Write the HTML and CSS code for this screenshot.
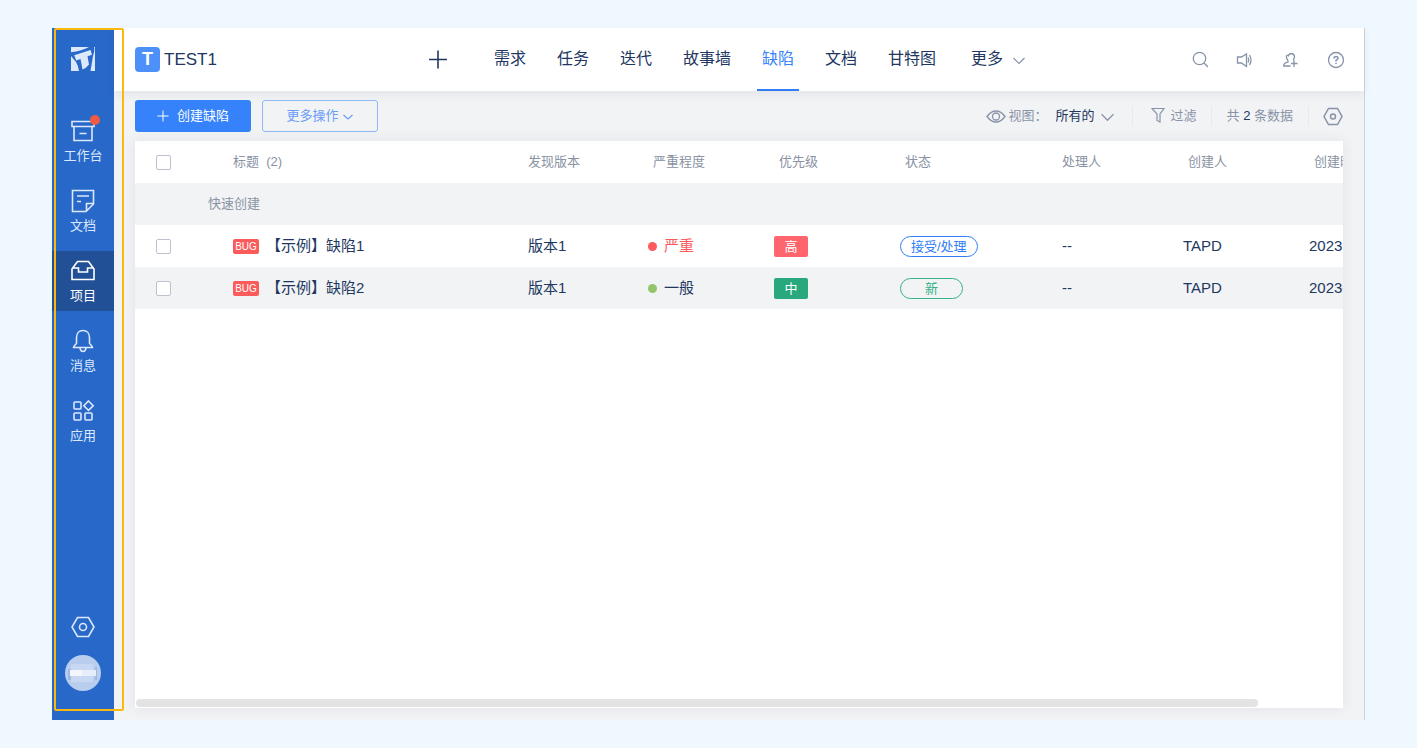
FILE: index.html
```html
<!DOCTYPE html>
<html lang="zh-CN">
<head>
<meta charset="utf-8">
<meta name="viewport" content="width=device-width, initial-scale=1">
<title>TEST1 - 缺陷</title>
<link rel="stylesheet" href="styles.css">
</head>
<body>
<div class="app">
  <aside class="sidebar">
    <svg class="logo" viewBox="0 0 24 24" aria-hidden="true">
      <path class="logo-tile" d="M0 0h24v24H0z"/>
      <path class="logo-cut" d="M0 5.200Q11 4 18 0L23 0Q24 3 22 9L19.500 24L8 24Q7 18 5 15L0 9z"/>
      <path class="logo-tile" d="M3.200 8.200L19.500 3L21 7.800L16.500 9.300L18 17.500Q15 21.500 11.500 22.500L9.500 12L5.200 13.500z"/>
    </svg>
    <nav class="side-nav">
      <a class="side-item" href="#">
        <svg viewBox="0 0 24 24"><path d="M1 2.500h22v5H1zM3 7.500v14h18v-14M8.500 14.500h7"/></svg>
        <span>工作台</span>
        <i class="unread"></i>
      </a>
      <a class="side-item" href="#">
        <svg viewBox="0 0 24 24"><path d="M1.500 1.500H22.500V15L15 22.500H1.500zM22 14.500h-6.500v7.500M6 7h12M6 12.500h4"/></svg>
        <span>文档</span>
      </a>
      <a class="side-item active" href="#">
        <svg viewBox="0 0 24 24"><path d="M1 10L6.500 2.500h11L23 10v10.500H1zM1 9h6.500v4h9v-4H23"/></svg>
        <span>项目</span>
      </a>
      <a class="side-item" href="#">
        <svg viewBox="0 0 24 24"><path d="M2.500 18.500Q2.500 17.500 5.500 14.500V8.500C5.500 4.500 8 1.500 12 1.500S18.500 4.500 18.500 8.500V14.500Q21.500 17.500 21.500 18.500zM9 19Q9.500 22.500 12 22.500T15 19"/></svg>
        <span>消息</span>
      </a>
      <a class="side-item" href="#">
        <svg viewBox="0 0 24 24"><rect x="3" y="3" width="7" height="7" rx="1"/><path d="M17.500 2L22.200 6.700L17.500 11.400L12.800 6.700z"/><rect x="3" y="14" width="7" height="7" rx="1"/><rect x="14" y="14" width="7" height="7" rx="1"/></svg>
        <span>应用</span>
      </a>
    </nav>
    <div class="side-foot">
      <button class="side-settings" type="button" aria-label="设置"><svg viewBox="0 0 24 24"><path d="M6.500 2.500h11L23 12l-5.500 9.500h-11L1 12z"/><circle cx="12" cy="12" r="3.500"/></svg></button>
      <svg class="avatar" viewBox="0 0 36 36" role="img" aria-label="头像"><circle cx="18" cy="18" r="18" fill="#b9cdef"/><path fill="#c9d8f2" d="M6 9h22v18H6z"/><path fill="#9fb9e5" d="M3 14h3v11H3zM30 12h2v13h-2z"/><path fill="#e8eef9" d="M5 15h26v6H5z"/><path fill="#f3f6fc" d="M5 15h12v6H5z"/></svg>
    </div>
  </aside>

  <div class="main">
    <header class="topbar">
      <div class="project"><span class="project-badge">T</span><span>TEST1</span></div>
      <button class="add" type="button" aria-label="新建"><svg viewBox="0 0 20 20"><path d="M10 0.500v18M1 9.500h18"/></svg></button>
      <nav class="tabs">
        <a href="#">需求</a>
        <a href="#">任务</a>
        <a href="#">迭代</a>
        <a href="#">故事墙</a>
        <a class="current" href="#">缺陷</a>
        <a href="#">文档</a>
        <a href="#">甘特图</a>
        <button class="more" type="button">更多<svg class="chevron" viewBox="0 0 12 12"><path d="M0.500 5l5.500 5.500 5.500-5.500"/></svg></button>
      </nav>
      <div class="tools">
        <button type="button" aria-label="搜索"><svg viewBox="0 0 20 20"><circle cx="11.500" cy="8.500" r="6.200"/><path d="M16 13l4 4"/></svg></button>
        <button type="button" aria-label="公告"><svg viewBox="0 0 20 20"><path d="M3.500 7h4l5-3v12.500l-5-3.500h-4zM14.200 7.500q1 2.500 0 5M15.500 5q3 5 0 10"/></svg></button>
        <button type="button" aria-label="邀请成员"><svg viewBox="0 0 20 20"><path d="M10.500 16H3.800V14.500Q4.500 12.800 8 12.200Q8.500 11 7.200 9.500Q5 5 8.500 4.800M8.500 6.500Q8.500 3.500 11.500 3.500Q14.500 4 14.500 7Q14.500 8.500 13 10M14 10v7M11 13.500h6.500"/></svg></button>
        <button type="button" aria-label="帮助"><svg viewBox="0 0 20 20"><circle cx="10" cy="10" r="7.500"/><path class="strong" d="M8 8.500Q8 6.500 10 6.500T12 8.300Q12 9.300 10 10.300V11.500M10 12.800v1.200"/></svg></button>
      </div>
    </header>

    <div class="content">
      <div class="toolbar">
        <button class="btn primary" type="button"><svg viewBox="0 0 12 12"><path d="M6 0.500v11M0.500 6h11"/></svg>创建缺陷</button>
        <button class="btn outline" type="button">更多操作<svg class="chevron" viewBox="0 0 12 12"><path d="M1.500 5l4.500 4 4.500-4"/></svg></button>
        <div class="filters">
          <div class="view">
            <svg class="eye" viewBox="0 0 20 14"><path d="M1 7.500Q5 2 10 2T19 7.500Q15 13 10 13T1 7.500z"/><circle cx="10" cy="7.500" r="3.500"/></svg>
            <label for="view">视图：</label>
            <span class="picker">
              <select id="view"><option>所有的</option></select>
              <svg class="chevron" viewBox="0 0 12 12"><path d="M0.500 4l5.500 5.500 5.500-5.500"/></svg>
            </span>
          </div>
          <button class="filter" type="button"><svg viewBox="0 0 14 16"><path d="M1 0.500h12L9 6v8l-3-1.500V6z"/></svg>过滤</button>
          <span class="count">共 <b>2</b> 条数据</span>
          <button class="columns" type="button" aria-label="列设置"><svg viewBox="0 0 20 20"><path d="M5.500 2.500h9L19 10.500l-4.500 8h-9L1 10.500z"/><circle cx="10" cy="10.500" r="2.500"/></svg></button>
        </div>
      </div>

      <section class="panel">
        <div class="scroller">
          <table>
            <colgroup><col class="c-check"><col class="c-title"><col class="c-version"><col class="c-std"><col class="c-std"><col class="c-status"><col class="c-std"><col class="c-std"><col class="c-std"></colgroup>
            <thead>
              <tr>
                <th><input type="checkbox" aria-label="全选"></th>
                <th>标题 &nbsp;(2)</th><th>发现版本</th><th>严重程度</th><th>优先级</th><th>状态</th><th>处理人</th><th>创建人</th><th>创建时间</th>
              </tr>
            </thead>
            <tbody>
              <tr class="shade"><td class="quick" colspan="9">快速创建</td></tr>
              <tr>
                <td><input type="checkbox" aria-label="选择缺陷1"></td>
                <td class="inset"><a class="title" href="#"><span class="bug">BUG</span>【示例】缺陷1</a></td>
                <td class="inset">版本1</td>
                <td><span class="severity serious">严重</span></td>
                <td><span class="priority high">高</span></td>
                <td><span class="status open">接受/处理</span></td>
                <td class="inset">--</td>
                <td>TAPD</td>
                <td>2023-</td>
              </tr>
              <tr class="shade">
                <td><input type="checkbox" aria-label="选择缺陷2"></td>
                <td class="inset"><a class="title" href="#"><span class="bug">BUG</span>【示例】缺陷2</a></td>
                <td class="inset">版本1</td>
                <td><span class="severity normal">一般</span></td>
                <td><span class="priority medium">中</span></td>
                <td><span class="status new">新</span></td>
                <td class="inset">--</td>
                <td>TAPD</td>
                <td>2023-</td>
              </tr>
            </tbody>
          </table>
        </div>
        <div class="track"><div class="thumb"></div></div>
      </section>
    </div>
  </div>
  <div class="highlight"></div>
</div>
</body>
</html>
```

FILE: styles.css
```css
* { box-sizing: border-box; }

body {
  margin: 0;
  padding: 28px 52px;
  background: #eff7ff;
  color: #22375f;
  font: 15px/20px "Liberation Sans", "Noto Sans CJK SC", sans-serif;
}

a { color: inherit; text-decoration: none; }

button {
  padding: 0;
  border: 0;
  background: none;
  color: inherit;
  font: inherit;
  cursor: pointer;
}

svg {
  display: block;
  fill: none;
  stroke: currentColor;
}

.app {
  position: relative;
  display: flex;
  min-height: calc(100vh - 56px);
}

.highlight {
  position: absolute;
  top: 0;
  bottom: 9px;
  left: 2px;
  width: 70px;
  border: 2px solid #fbb80f;
  border-radius: 2px;
  pointer-events: none;
}

/* Sidebar */

.sidebar {
  display: flex;
  flex: none;
  flex-direction: column;
  width: 62px;
  padding: 19px 0 29px;
  background: #2868c9;
  color: #dce8fb;
}

.logo { width: 24px; height: 24px; margin: 0 auto 40px; stroke: none; }
.logo-tile { fill: #dce8fb; }
.logo-cut { fill: #2868c9; }

.side-nav { display: flex; flex-direction: column; gap: 10px; }

.side-item {
  position: relative;
  display: flex;
  flex-direction: column;
  align-items: center;
  gap: 4px;
  height: 60px;
  padding-top: 8px;
  font-size: 13px;
  line-height: 18px;
}

.side-item svg, .side-settings svg { width: 24px; height: 24px; stroke-width: 1.6; }
.side-item.active { background: #215097; color: #fff; }

.unread {
  position: absolute;
  top: 4px;
  right: 14px;
  width: 10px;
  height: 10px;
  border-radius: 50%;
  background: #ee5a42;
}

.side-foot {
  display: flex;
  flex-direction: column;
  align-items: center;
  gap: 16px;
  margin-top: auto;
}

.avatar { width: 36px; height: 36px; stroke: none; }

/* Top bar */

.main {
  display: flex;
  flex: 1;
  flex-direction: column;
  min-width: 0;
  border-right: 1px solid #cdd3da;
  background: #f2f3f5;
}

.topbar {
  display: flex;
  align-items: center;
  height: 63px;
  padding: 0 18px 0 21px;
  background: #fff;
  box-shadow: 0 4px 8px rgba(40, 55, 80, 0.07);
}

.project {
  display: flex;
  align-items: center;
  gap: 4px;
  width: 293px;
  font-size: 17px;
}

.project-badge {
  width: 25px;
  border-radius: 4px;
  background: #4e90fa;
  color: #fff;
  font-size: 18px;
  font-weight: 700;
  line-height: 25px;
  text-align: center;
}

.add svg { width: 20px; height: 20px; stroke-width: 1.6; }

.tabs {
  display: flex;
  gap: 21px;
  align-self: stretch;
  margin-left: 41px;
  font-size: 16px;
  white-space: nowrap;
}

.tabs a { padding: 21px 5px 0; border-bottom: 2px solid transparent; }
.tabs .current { border-color: #2f7cf6; color: #3582fb; }

.more {
  display: flex;
  align-items: center;
  gap: 10px;
  height: 62px;
  margin-left: 9px;
}

.chevron { width: 12px; height: 12px; color: #8993a8; stroke-width: 1.2; }

.tools { display: flex; gap: 26px; margin-left: auto; color: #8793a8; }
.tools svg { width: 20px; height: 20px; stroke-width: 1.3; }
.tools .strong { stroke-width: 1.5; }

/* Toolbar */

.content {
  display: flex;
  flex: 1;
  flex-direction: column;
  padding: 9px 21px 12px;
}

.toolbar {
  display: flex;
  align-items: center;
  gap: 11px;
  margin-bottom: 9px;
  font-size: 13px;
  white-space: nowrap;
}

.btn {
  display: flex;
  align-items: center;
  justify-content: center;
  width: 116px;
  height: 32px;
  border-radius: 3px;
}

.primary { gap: 8px; background: #3582fb; color: #fff; }
.primary svg { width: 12px; height: 12px; }
.outline { gap: 3px; border: 1px solid #8fb8fa; color: #6b9df8; }
.outline .chevron { color: inherit; }

.filters {
  display: flex;
  align-items: center;
  margin-left: auto;
  color: #8993a8;
}

.filters > * { height: 20px; }
.view { display: flex; align-items: center; padding-right: 18px; }
.eye { width: 20px; height: 14px; margin-right: 2px; stroke-width: 1.3; }
.picker { display: grid; align-items: center; width: 58px; margin-left: 8px; }
.picker > * { grid-area: 1 / 1; }
.picker .chevron { justify-self: end; width: 13px; height: 13px; pointer-events: none; }

select {
  width: 100%;
  padding: 0;
  border: 0;
  appearance: none;
  background: none;
  color: #22375f;
  font: inherit;
}

.filter {
  display: flex;
  align-items: center;
  gap: 6px;
  padding: 0 14px 0 18px;
  border-right: 1px solid #e8eaee;
  border-left: 1px solid #e8eaee;
}

.filter svg { width: 14px; height: 16px; stroke-width: 1.2; }
.count { padding: 0 15px; border-right: 1px solid #e8eaee; }
.count b { color: #22375f; font-weight: 400; }
.columns { padding-left: 14px; }
.columns svg { width: 20px; height: 20px; stroke-width: 1.5; }

/* Table */

.panel {
  display: flex;
  flex: 1;
  flex-direction: column;
  background: #fff;
  box-shadow: 0 0 12px rgba(40, 55, 80, 0.09);
}

.scroller { flex: 1; overflow: hidden; }

table {
  width: 100%;
  min-width: 1300px;
  border-collapse: collapse;
  table-layout: fixed;
}

.c-check { width: 93px; }
.c-title { width: 295px; }
.c-version { width: 125px; }
.c-std { width: 126px; }
.c-status { width: 157px; }

th, td { height: 42px; padding: 0; text-align: left; white-space: nowrap; }
th { padding-left: 5px; color: #8993a3; font-size: 13px; font-weight: 400; }
th:first-child, td:first-child { padding-left: 21px; }
td.inset { padding-left: 5px; }
td.quick:first-child { padding-left: 73px; color: #8993a3; font-size: 13px; }
.shade { background: #f2f3f5; }

input[type="checkbox"] {
  display: block;
  width: 15px;
  height: 15px;
  margin: 0;
  border: 1px solid #bcc2d0;
  border-radius: 2px;
  appearance: none;
  background: #fff;
}

.title { display: flex; align-items: center; gap: 7px; }

.bug {
  width: 26px;
  border-radius: 2px;
  background: #fb5b5b;
  color: #fff;
  font-size: 10px;
  line-height: 15px;
  text-align: center;
}

.severity { display: flex; align-items: center; gap: 7px; }
.severity::before { width: 9px; height: 9px; border-radius: 50%; background: #92c56b; content: ""; }
.serious { color: #fb5b5b; }
.serious::before { background: #fb5b5b; }

.priority {
  display: block;
  width: 34px;
  border-radius: 2px;
  color: #fff;
  font-size: 13px;
  line-height: 21px;
  text-align: center;
}

.high { background: #fe656d; }
.medium { background: #28a87c; }

.status {
  display: block;
  width: max-content;
  min-width: 63px;
  padding: 0 10px;
  border: 1px solid;
  border-radius: 11px;
  font-size: 13px;
  line-height: 19px;
  text-align: center;
}

.open { color: #2f7cf6; }
.new { color: #35b087; }

.track { padding: 0 1px 1px; }
.thumb { width: 93%; height: 8px; border-radius: 4px; background: #e3e3e3; }
```
